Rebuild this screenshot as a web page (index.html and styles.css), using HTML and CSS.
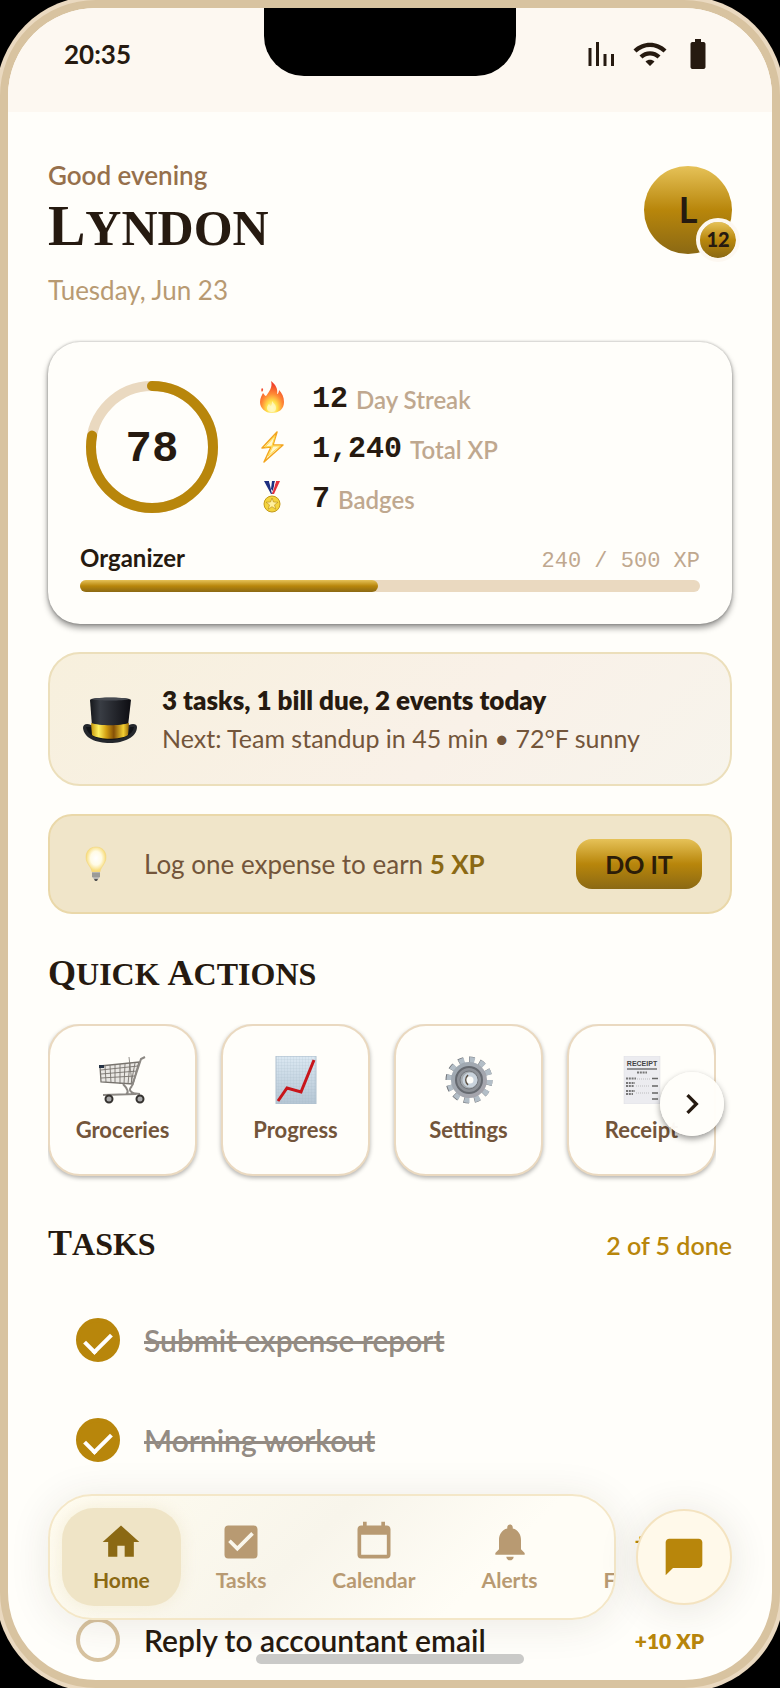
FILE: index.html
```html
<!DOCTYPE html>
<html lang="en">
<head>
  <meta charset="UTF-8">
  <meta name="viewport" content="width=device-width, initial-scale=1.0">
  <title>Home</title>
  <link rel="stylesheet" href="styles.css">
</head>
<body>
  <div class="phone">
    <div class="notch"></div>

    <div class="status-bar">
      <span class="clock">20:35</span>
      <div class="status-icons">
        <svg viewBox="0 0 24 24"><path d="M3 8h2v12H3zM8 4h2v16H8zM13 12h2v8h-2zM18 12h2v8h-2z"/></svg>
        <svg viewBox="0 0 24 24"><path d="M1 9l2 2c4.97-4.97 13.03-4.97 18 0l2-2C16.93 2.93 7.08 2.93 1 9zm8 8l3 3 3-3c-1.65-1.66-4.34-1.66-6 0zm-4-4l2 2c2.76-2.76 7.24-2.76 10 0l2-2C15.14 9.14 8.87 9.14 5 13z"/></svg>
        <svg viewBox="0 0 24 24"><path d="M15.67 4H14V2h-4v2H8.33C7.6 4 7 4.6 7 5.33v15.33C7 21.4 7.6 22 8.33 22h7.33c.74 0 1.34-.6 1.34-1.33V5.33C17 4.6 16.4 4 15.67 4z"/></svg>
      </div>
    </div>

    <main class="screen">
      <header class="greeting">
        <div>
          <p class="hello">Good evening</p>
          <h1><span class="cap">L</span>yndon</h1>
          <p class="date">Tuesday, Jun 23</p>
        </div>
        <div class="avatar">L<span class="level">12</span></div>
      </header>

      <section class="card stats">
        <div class="stats-top">
          <div class="ring">
            <svg viewBox="0 0 132 132">
              <circle cx="66" cy="66" r="61" stroke="#ead9c0"/>
              <circle cx="66" cy="66" r="61" stroke="#b8860b" stroke-linecap="round" pathLength="100" stroke-dasharray="78 100" transform="rotate(-90 66 66)"/>
            </svg>
            <span>78</span>
          </div>
          <ul class="stat-list">
            <li>
              <svg viewBox="0 0 32 32">
                <defs>
                  <radialGradient id="fire" cx=".5" cy=".85" r=".75">
                    <stop offset="0" stop-color="#fffbd0"/><stop offset=".3" stop-color="#ffe04a"/><stop offset=".6" stop-color="#ff8a35"/><stop offset="1" stop-color="#f0402a"/>
                  </radialGradient>
                </defs>
                <path fill="url(#fire)" d="M15 0c5 4 7 8 6 13 1 0 2-2 2-4 3 3 5 7 5 12 0 7-5 11-12 11S4 27 4 21c0-4 2-7 3-9 1 1 2 3 3 3 3-4 7-9 5-15zM6 7c2 1 1 3 0 4-1-1-1-3 0-4z"/>
                <path fill="#fff9c0" opacity=".8" d="M16 20c2 3 4 4 4 7 0 3-2 4-4 4s-5-1-5-4c0-2 1-3 2-4 1 1 1 2 2 2 1-1 1-3 1-5z"/>
              </svg>
              <b>12</b><span>Day Streak</span>
            </li>
            <li>
              <svg viewBox="0 0 32 32"><path fill="#fff7cf" stroke="#f3a51d" stroke-width="1.5" stroke-linejoin="round" d="M21 1L6 17l9-1L8 31l19-17-10 0z"/><path fill="none" stroke="#ffd94a" d="M19 5L9 16l8-1-5 10 12-10-8 0z"/></svg>
              <b>1,240</b><span>Total XP</span>
            </li>
            <li>
              <svg viewBox="0 0 32 32">
                <path fill="#1f2f80" d="M8 0h5l5 13h-3z"/><path fill="#fff" d="M13 0h3l2 8-2 5z"/>
                <path fill="#1f2f80" d="M16 0h3l-2 10-2-2z"/><path fill="#e4313c" d="M20 0h4l-6 13h-2z"/><path fill="#fff" d="M19 0h1l-3 11z"/>
                <circle cx="16" cy="23" r="8" fill="#f4d43e" stroke="#c49a1a"/>
                <path fill="#fff0a0" stroke="#b88c16" stroke-width=".6" d="M16 17l1.500 4 4.500.2-3.500 2.700 1.300 4.300L16 25.700l-3.800 2.500 1.300-4.300-3.500-2.700 4.500-.2z"/>
              </svg>
              <b>7</b><span>Badges</span>
            </li>
          </ul>
        </div>
        <div class="rank">
          <strong>Organizer</strong>
          <span>240 / 500 XP</span>
        </div>
        <div class="bar"><div class="bar-fill" style="width: 48%"></div></div>
      </section>

      <section class="card brief">
        <svg viewBox="0 0 56 48">
          <defs>
            <linearGradient id="hat"><stop offset="0" stop-color="#15171b"/><stop offset=".25" stop-color="#393d44"/><stop offset="1" stop-color="#0d0d12"/></linearGradient>
            <linearGradient id="band"><stop offset="0" stop-color="#c39309"/><stop offset=".2" stop-color="#fff15e"/><stop offset=".4" stop-color="#d4a012"/><stop offset=".6" stop-color="#855006"/><stop offset=".85" stop-color="#f3cf32"/><stop offset="1" stop-color="#9c6b07"/></linearGradient>
          </defs>
          <path fill="#24272c" d="M1 33c0-4 4-5 8-3l38 0c4-2 8-1 8 2 0 10-13 16-27 16S2 43 1 33z"/>
          <path fill="#111318" d="M4 32c1 8 12 13 24 13s23-5 24-13l-4 0-2 8H11l-2-8z"/>
          <path fill="url(#hat)" d="M8 5c0-3 40-3 41 0l-3 26H10z"/>
          <path fill="#474b52" d="M9 4c8-2 31-2 39 0-8 2-31 2-39 0z"/>
          <path fill="url(#band)" d="M9 28c9 3 29 3 38 0l-1 12c-8 5-28 5-36 0z"/>
        </svg>
        <div>
          <p class="brief-title">3 tasks, 1 bill due, 2 events today</p>
          <p class="brief-next">Next: Team standup in 45 min • 72°F sunny</p>
        </div>
      </section>

      <section class="card tip">
        <svg viewBox="0 0 36 36">
          <defs><radialGradient id="bulb" cy=".45"><stop offset="0" stop-color="#fff"/><stop offset=".55" stop-color="#fffbe6"/><stop offset="1" stop-color="#f8dc79"/></radialGradient></defs>
          <path fill="url(#bulb)" stroke="#f1d27a" stroke-width=".5" d="M18 1c6 0 10 4 10 10 0 7-5 9-6 15h-8C13 20 8 18 8 11 8 5 12 1 18 1z"/>
          <path fill="#b5b5b3" d="M14 26h8v5l-2 2h-4l-2-2z"/><path stroke="#81817d" d="M14 28h8M14 30h8"/><path fill="#555" d="M16 33h4l-1 2h-2z"/>
        </svg>
        <p>Log one expense to earn <b>5 XP</b></p>
        <button class="do-it">DO IT</button>
      </section>

      <section class="quick">
        <h2><span class="cap">Q</span>uick <span class="cap">A</span>ctions</h2>
        <div class="quick-wrap">
          <div class="quick-list">
            <button class="quick-card">
              <svg viewBox="0 0 48 48" fill="none" stroke="#77736d">
                <path fill="#e9e7e3" stroke-width="1.300" d="M1 10l39-4-6 22-32-2z"/>
                <path stroke-width=".9" d="M2 14l37-4M2 18l36-3M2 22l34-2M6 10l1 16M11 9l1 18M16 9v18M21 8v20M26 8l-1 20M31 7l-2 21M36 7l-4 21"/>
                <path stroke="#8c8883" stroke-width="2" d="M46 1l-4 2-9 27M33 30c-4 4-2 6 4 8L4 39M24 28c5 5 6 9 3 10M41 38l-9-1"/>
                <path stroke-width=".8" d="M30 1l3 26"/><path fill="#253244" stroke="none" d="M0 9h5v3H0z"/>
                <circle cx="10" cy="43" r="3.500" fill="#aaa" stroke="#35322f" stroke-width="2"/><circle cx="41" cy="43" r="3.500" fill="#aaa" stroke="#35322f" stroke-width="2"/>
              </svg>
              Groceries
            </button>
            <button class="quick-card">
              <svg viewBox="0 0 48 48">
                <defs>
                  <linearGradient id="sheet" x2="0" y2="1"><stop offset="0" stop-color="#dbe8f2"/><stop offset="1" stop-color="#b5c6d4"/></linearGradient>
                  <pattern id="grid" width="3" height="3" patternUnits="userSpaceOnUse"><path d="M3 0H0v3" fill="none" stroke="#9fb3c6" stroke-width=".3"/></pattern>
                </defs>
                <path fill="url(#sheet)" d="M4 0h40v48H4z"/><path fill="url(#grid)" stroke="#afc0ce" d="M4 0h40v48H4z"/>
                <path fill="none" stroke="#c8151a" stroke-width="3" d="M6 45l9-13 14 4L42 4"/>
              </svg>
              Progress
            </button>
            <button class="quick-card">
              <svg viewBox="0 0 48 48">
                <defs><linearGradient id="gear" x2="1" y2="1"><stop offset="0" stop-color="#9fabb4"/><stop offset="1" stop-color="#a6a3aa"/></linearGradient></defs>
                <circle cx="24" cy="24" r="20.500" fill="none" stroke="#74777c" stroke-width="6" pathLength="120" stroke-dasharray="5 5"/>
                <circle cx="24.500" cy="24" r="20" fill="none" stroke="#b3bec7" stroke-width="6" pathLength="120" stroke-dasharray="5 5"/>
                <circle cx="24" cy="24" r="18" fill="url(#gear)"/>
                <circle cx="24" cy="24" r="13" fill="#8d9197" stroke="#666a70" stroke-width="2"/>
                <circle cx="24" cy="24" r="9" fill="#a4a9ae" stroke="#73777c"/>
                <circle cx="25" cy="24" r="5.500" fill="#fffefa" stroke="#c9d3dc" stroke-width="4"/>
                <path fill="none" stroke="#5c5042" stroke-width="1.500" d="M23 19c-3 3-3 7 0 10"/>
              </svg>
              Settings
            </button>
            <button class="quick-card">
              <svg viewBox="0 0 48 48">
                <path fill="#ececf0" stroke="#dcdce0" stroke-width=".5" d="M6 0h36v48H6z"/>
                <text x="24" y="10" class="receipt-head">RECEIPT</text>
                <path stroke="#555" stroke-width="1.200" d="M9 13h30"/>
                <path stroke="#777" stroke-width="2" stroke-dasharray="2 .8" d="M19 16.500h10M8 22.500h10M8 27h9M8 30h8M8 35h9M8 38h7"/>
                <path stroke="#666" stroke-width="1.500" d="M34 22.500h6M34 30h6M34 37h6M34 43h6"/><path stroke="#aaa" stroke-width=".7" stroke-dasharray="1 1" d="M19 23h14M18 30h14M18 37h14"/>
              </svg>
              Receipt
            </button>
          </div>
          <button class="next" aria-label="Next">
            <svg viewBox="0 0 24 24"><path d="M10 6L8.590 7.410 13.170 12l-4.580 4.590L10 18l6-6z"/></svg>
          </button>
        </div>
      </section>

      <section class="tasks">
        <div class="tasks-head">
          <h2><span class="cap">T</span>asks</h2>
          <span class="done">2 of 5 done</span>
        </div>
        <ul class="task-list">
          <li><input type="checkbox" id="t1" checked><label for="t1">Submit expense report</label></li>
          <li><input type="checkbox" id="t2" checked><label for="t2">Morning workout</label></li>
          <li><input type="checkbox" id="t3"><label for="t3">Pay electric bill</label><span>+15 XP</span></li>
          <li><input type="checkbox" id="t4"><label for="t4">Reply to accountant email</label><span>+10 XP</span></li>
        </ul>
      </section>
    </main>

    <div class="dock">
      <nav class="tabs">
        <a href="#" class="active"><svg viewBox="0 0 24 24"><path d="M10 20v-6h4v6h5v-8h3L12 3 2 12h3v8z"/></svg>Home</a>
        <a href="#"><svg viewBox="0 0 24 24"><path d="M10 17l-5-5 1.410-1.420L10 14.170l7.590-7.590L19 8M19 3H5c-1.110 0-2 .89-2 2v14a2 2 0 0 0 2 2h14a2 2 0 0 0 2-2V5c0-1.110-.9-2-2-2z"/></svg>Tasks</a>
        <a href="#"><svg viewBox="0 0 24 24"><path d="M19 19H5V8h14M16 1v2H8V1H6v2H5c-1.110 0-2 .89-2 2v14a2 2 0 0 0 2 2h14a2 2 0 0 0 2-2V5c0-1.110-.9-2-2-2h-1V1"/></svg>Calendar</a>
        <a href="#"><svg viewBox="0 0 24 24"><path d="M12 22c1.100 0 2-.9 2-2h-4c0 1.100.89 2 2 2zm6-6v-5c0-3.070-1.640-5.640-4.500-6.320V4c0-.83-.67-1.500-1.500-1.500s-1.500.67-1.500 1.500v.68C7.630 5.360 6 7.920 6 11v5l-2 2v1h16v-1l-2-2z"/></svg>Alerts</a>
        <a href="#">Finance</a>
      </nav>
      <button class="chat" aria-label="Chat">
        <svg viewBox="0 0 24 24"><path d="M20 2H4c-1.100 0-2 .9-2 2v18l4-4h14c1.100 0 2-.9 2-2V4c0-1.100-.9-2-2-2z"/></svg>
      </button>
    </div>
    <div class="home-indicator"></div>
  </div>
</body>
</html>
```

FILE: styles.css
```css
* { box-sizing: border-box; margin: 0; padding: 0; }

:root {
  --ink: #261a10;
  --brown: #73553a;
  --tan: #b89a72;
  --gold: #b8860b;
  --gold-dark: #8b6914;
  --paper: #fffefa;
  --shine: linear-gradient(180deg, #e6c258 0%, #b8860b 50%, #8b6914 100%);
}

body {
  background: #000;
  color: var(--ink);
  font-family: Lato, 'Open Sans', sans-serif;
  font-size: 26px;
}

ul { list-style: none; }
button { border: none; font-family: inherit; color: inherit; cursor: pointer; }
svg { display: block; flex: none; }

.phone {
  position: relative;
  display: flex;
  flex-direction: column;
  height: 100vh;
  background: var(--paper);
  border: 8px solid #d8c3a0;
  border-radius: 96px;
  box-shadow: 0 0 0 4px #ead9c0;
  overflow: hidden;
}

.notch {
  position: absolute;
  top: 0;
  left: 50%;
  width: 252px;
  height: 68px;
  margin-left: -126px;
  background: #000;
  border-radius: 0 0 40px 40px;
}

/* status bar */
.status-bar {
  display: flex;
  flex: none;
  justify-content: space-between;
  align-items: flex-start;
  height: 104px;
  padding: 28px 56px;
  background: #fdf8f1;
}

.clock {
  font-weight: 700;
  line-height: 36px;
}

.status-icons {
  display: flex;
  gap: 12px;
}

.status-icons svg {
  width: 36px;
  height: 36px;
  fill: var(--ink);
}

.screen {
  display: flex;
  flex: 1;
  flex-direction: column;
  gap: 28px;
  min-height: 0;
  padding: 46px 40px 0;
  overflow-y: auto;
  scrollbar-width: none;
}

.screen > * { flex: none; }

/* greeting */
.greeting {
  display: flex;
  justify-content: space-between;
  align-items: flex-start;
  margin-bottom: 8px;
}

.hello {
  color: #96704c;
  font-weight: 600;
  line-height: 34px;
}

h1, h2 {
  font-family: 'Liberation Serif', serif;
  font-weight: 700;
  text-transform: uppercase;
}

h1 {
  margin: 6px 0 16px;
  font-size: 50px;
  line-height: 60px;
}

h1 .cap { font-size: 56px; line-height: 1; }

h2 {
  font-size: 32px;
  line-height: 40px;
}

h2 .cap { font-size: 36px; line-height: 1; }

.date {
  color: var(--tan);
  line-height: 32px;
}

.avatar {
  position: relative;
  width: 88px;
  height: 88px;
  margin-top: 8px;
  background: var(--shine);
  border-radius: 50%;
  font-size: 36px;
  font-weight: 700;
  line-height: 86px;
  text-align: center;
}

.level {
  position: absolute;
  right: -8px;
  bottom: -8px;
  width: 44px;
  height: 44px;
  background: var(--shine);
  background-clip: padding-box;
  border: 4px solid #fdf8f1;
  border-radius: 50%;
  font-size: 20px;
  font-weight: 900;
  line-height: 34px;
}

/* cards */
.card { border-radius: 32px; }

.stats {
  padding: 30px 32px 32px;
  box-shadow: 0 4px 6px rgba(0, 0, 0, .4), 0 0 3px rgba(0, 0, 0, .3);
}

.stats-top {
  display: flex;
  gap: 36px;
  align-items: center;
  padding: 0 6px;
}

.ring {
  display: grid;
  width: 132px;
  height: 136px;
  place-items: center;
}

.ring svg, .ring span { grid-area: 1 / 1; }
.ring svg { width: 132px; height: 132px; fill: none; stroke-width: 10px; }

.ring span {
  padding-top: 4px;
  font-family: 'Liberation Mono', monospace;
  font-size: 44px;
  font-weight: 700;
}

.stat-list li {
  display: flex;
  align-items: center;
  height: 50px;
}

.stat-list svg {
  width: 32px;
  height: 32px;
  margin: 0 24px 0 2px;
}

.stat-list b {
  margin-right: 8px;
  padding-top: 4px;
  font-family: 'Liberation Mono', monospace;
  font-size: 30px;
  line-height: 36px;
}

.stat-list span {
  padding-top: 4px;
  color: #bfa88f;
  font-size: 24px;
  font-weight: 600;
}

.rank {
  display: flex;
  justify-content: space-between;
  align-items: baseline;
  margin: 20px 0 6px;
  line-height: 32px;
}

.rank strong { font-size: 24px; }

.rank span {
  color: #bfa88f;
  font-family: 'Liberation Mono', monospace;
  font-size: 22px;
  line-height: 24px;
}

.bar {
  height: 12px;
  background: #ead9c0;
  border-radius: 6px;
}

.bar-fill {
  height: 100%;
  background: var(--shine);
  border-radius: 6px;
}

.brief {
  display: flex;
  gap: 24px;
  align-items: center;
  padding: 27px 32px;
  background: linear-gradient(135deg, #f7f0dd 0%, #f9f1e8 60%, #f7f4ec 100%);
  border: 2px solid #ecdfbb;
  line-height: 38px;
}

.brief svg { width: 56px; height: 48px; }
.brief-title { font-weight: 800; }
.brief-next { color: var(--brown); font-size: 25px; }

.tip {
  display: flex;
  align-items: center;
  padding: 23px 28px;
  background: #f0e5c9;
  border: 2px solid #ead8a9;
  border-radius: 24px;
  color: var(--brown);
}

.tip svg { width: 36px; height: 36px; margin-right: 30px; }
.tip p { flex: 1; }
.tip b { color: var(--gold-dark); }

.do-it {
  width: 126px;
  height: 50px;
  background: var(--shine);
  border-radius: 16px;
  color: #2c1d08;
  font-size: 25px;
  font-weight: 700;
}

/* quick actions */
.quick { margin-top: 12px; }

.quick-wrap {
  position: relative;
  margin-top: 30px;
}

.quick-list {
  display: grid;
  grid-template-columns: repeat(4, 1fr);
  gap: 24px;
  margin-right: 16px;
  padding-bottom: 8px;
  overflow: hidden;
}

.quick-card {
  display: flex;
  flex-direction: column;
  gap: 14px;
  align-items: center;
  height: 152px;
  padding-top: 30px;
  background: var(--paper);
  border: 2px solid #ead9c0;
  border-radius: 32px;
  box-shadow: 0 2px 4px rgba(0, 0, 0, .3);
  color: var(--brown);
  font-size: 22px;
  font-weight: 700;
  line-height: 24px;
}

.quick-card svg { width: 48px; height: 48px; }

.receipt-head {
  fill: #444;
  font: 700 7px 'Liberation Sans', sans-serif;
  text-anchor: middle;
}

.next {
  position: absolute;
  top: 48px;
  right: 8px;
  display: grid;
  width: 64px;
  height: 64px;
  place-items: center;
  background: rgba(255, 254, 250, .97);
  border-radius: 50%;
  box-shadow: 0 3px 6px rgba(0, 0, 0, .4);
}

.next svg { width: 40px; height: 40px; fill: var(--ink); }

/* tasks */
.tasks { margin-top: 12px; }

.tasks-head {
  display: flex;
  justify-content: space-between;
  align-items: baseline;
}

.done {
  color: var(--gold);
  font-size: 25px;
  font-weight: 600;
}

.task-list { padding: 26px 28px 0; }

.task-list li {
  display: flex;
  gap: 24px;
  align-items: center;
  height: 100px;
}

.task-list input {
  display: grid;
  flex: none;
  width: 44px;
  height: 44px;
  place-content: center;
  appearance: none;
  border: 4px solid #d8c3a0;
  border-radius: 50%;
}

.task-list input:checked {
  background: var(--gold);
  border-color: var(--gold);
}

.task-list input:checked::after {
  content: "";
  width: 22px;
  height: 12px;
  border: solid #fff;
  border-width: 0 0 4px 4px;
  transform: rotate(-45deg);
}

.task-list label {
  flex: 1;
  font-size: 30px;
  font-weight: 600;
}

.task-list input:checked + label {
  color: #938b83;
  text-decoration: line-through;
}

.task-list span {
  color: var(--gold);
  font-size: 21px;
  font-weight: 800;
}

/* bottom navigation */
.dock {
  position: absolute;
  right: 40px;
  bottom: 60px;
  left: 40px;
  display: flex;
  gap: 20px;
  align-items: center;
}

.tabs {
  display: flex;
  flex: 1;
  gap: 4px;
  min-width: 0;
  padding: 12px;
  background: linear-gradient(135deg, #fffcf0 0%, #f8f5eb 45%, #fffdf6 75%);
  border: 2px solid #f4e7c8;
  border-radius: 44px;
  box-shadow: 0 4px 40px rgba(60, 50, 30, .1);
  overflow: hidden;
}

.tabs a {
  display: flex;
  flex: none;
  flex-direction: column;
  gap: 4px;
  align-items: center;
  justify-content: flex-end;
  height: 98px;
  padding: 12px 31px 14px;
  border-radius: 32px;
  color: var(--tan);
  font-size: 21px;
  font-weight: 700;
  line-height: 24px;
  text-decoration: none;
}

.tabs svg { width: 44px; height: 44px; fill: currentColor; fill-rule: evenodd; }

.tabs .active {
  background: #efe4c6;
  box-shadow: 0 0 16px rgba(239, 228, 198, .6);
  color: var(--gold-dark);
}

.chat {
  display: grid;
  flex: none;
  width: 96px;
  height: 96px;
  place-items: center;
  background: #fff9ea;
  border: 2px solid #f4e3c0;
  border-radius: 50%;
  box-shadow: 0 4px 40px rgba(60, 50, 30, .12);
}

.chat svg { width: 44px; height: 44px; fill: var(--gold); }

.home-indicator {
  position: absolute;
  bottom: 16px;
  left: 50%;
  width: 268px;
  height: 10px;
  margin-left: -134px;
  background: #cacac8;
  border-radius: 5px;
}
```
